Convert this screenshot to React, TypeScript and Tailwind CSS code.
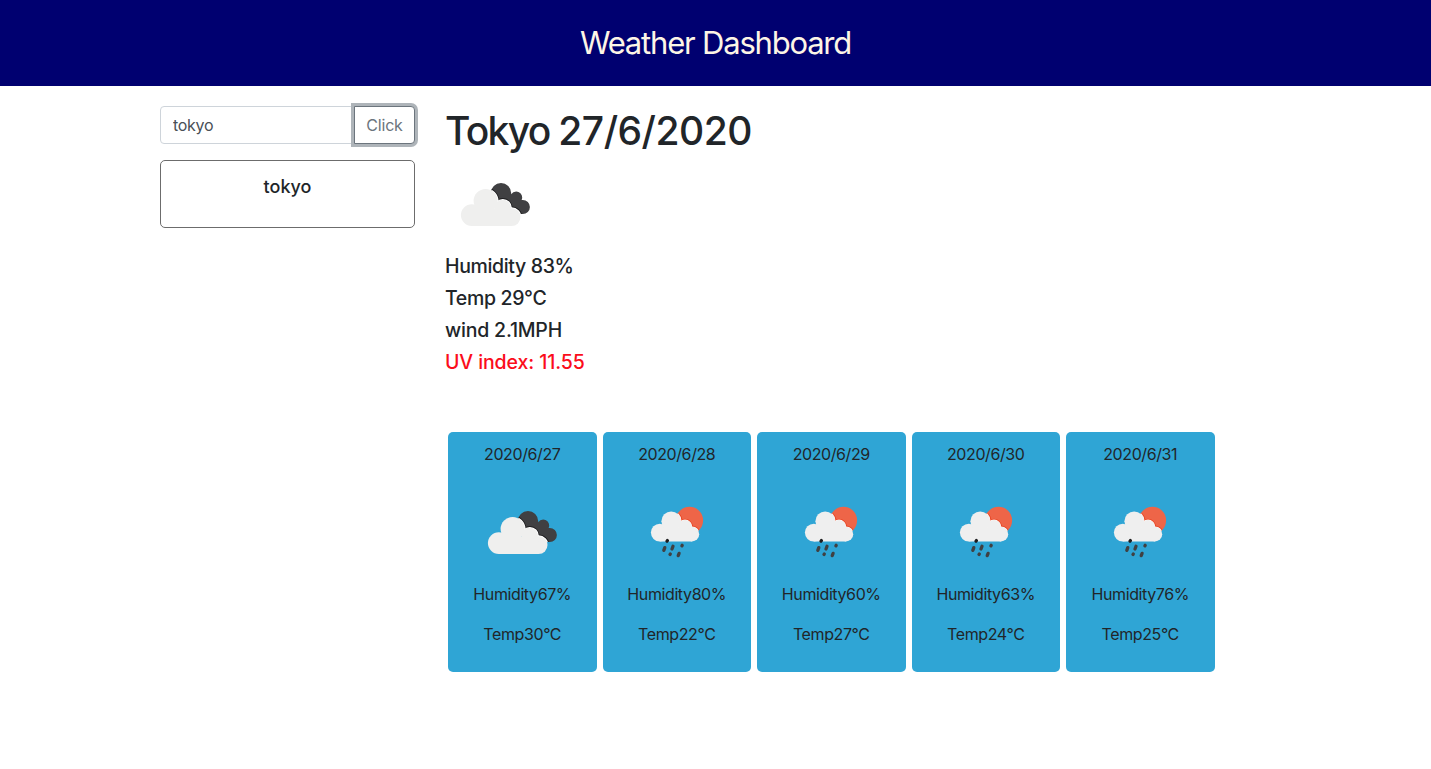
function CloudShape({ grow = 0, fill }: { grow?: number; fill: string }) {
  return (
    <g fill={fill} stroke={fill} strokeWidth={grow * 2}>
      <circle cx="26.8" cy="61.1" r="10.9" />
      <circle cx="40.6" cy="47.1" r="12" />
      <circle cx="57.8" cy="54" r="8.2" />
      <circle cx="66.6" cy="63.1" r="8.9" />
      <path d="M26.8 72V55H60L66.6 60V72Z" />
    </g>
  );
}

function BrokenClouds({ id }: { id: string }) {
  return (
    <svg className="block size-[100px]" viewBox="0 0 100 100" aria-hidden="true">
      <defs>
        <clipPath id={id}>
          <circle cx="56" cy="39.2" r="10.2" />
          <circle cx="71.2" cy="43.4" r="6" />
          <circle cx="77.8" cy="53" r="7.1" />
          <path d="M50 46L62 37L74 47L78 60L66 60Z" />
        </clipPath>
      </defs>
      <g clipPath={`url(#${id})`}>
        <rect width="100" height="100" fill="#404042" />
        <CloudShape grow={1.7} fill="#1c1c1e" />
        <CloudShape grow={0.9} fill="#ffffff" />
      </g>
      <CloudShape fill="#efefee" />
    </svg>
  );
}

function SmallCloud({ grow = 0, fill }: { grow?: number; fill: string }) {
  return (
    <g fill={fill} stroke={fill} strokeWidth={grow * 2}>
      <circle cx="32.8" cy="50.6" r="8.9" />
      <circle cx="44.2" cy="39.2" r="9.8" />
      <circle cx="58" cy="44.8" r="6.6" />
      <circle cx="65" cy="52.2" r="7.2" />
      <path d="M32.8 59.5V46H60L65 50V59.5Z" />
    </g>
  );
}

function SunRain({ id }: { id: string }) {
  return (
    <svg className="block size-[100px]" viewBox="0 0 100 100" aria-hidden="true">
      <defs>
        <clipPath id={id}>
          <circle cx="62.5" cy="38.4" r="13.6" />
        </clipPath>
      </defs>
      <g clipPath={`url(#${id})`}>
        <rect width="100" height="100" fill="#ee6548" />
        <SmallCloud grow={1.4} fill="#ea4523" />
        <SmallCloud grow={0.6} fill="#f8f4f2" />
      </g>
      <SmallCloud fill="#efefef" />
      <g stroke="#404042" strokeWidth="3.3" strokeLinecap="round">
        <path d="M40.4 58.6L40 59.2" stroke="#1c1c1e" />
        <path d="M37.8 65.6L36.8 68.4" />
        <path d="M46 64.3L45 67" />
        <path d="M55.2 63.3L54.9 63.8" />
        <path d="M43.3 72.1L43 72.5" />
        <path d="M52.1 71.4L51.2 73.6" />
      </g>
    </svg>
  );
}

const days = [
  { date: "2020/6/27", humidity: 67, temp: 30, rain: false },
  { date: "2020/6/28", humidity: 80, temp: 22, rain: true },
  { date: "2020/6/29", humidity: 60, temp: 27, rain: true },
  { date: "2020/6/30", humidity: 63, temp: 24, rain: true },
  { date: "2020/6/31", humidity: 76, temp: 25, rain: true },
];

export default function App() {
  return (
    <div className="min-h-[769px] bg-white font-['Inter',sans-serif] text-base leading-6 text-[#212529]">
      <header className="flex h-[86px] items-center justify-center bg-[#000070]">
        <h1 className="pb-px text-[31px] leading-[38px] font-[430] tracking-[-1.2px] text-[#fdf5e6]">
          Weather Dashboard
        </h1>
      </header>
      <div className="mx-auto flex w-[1141px] pt-5">
        <aside className="w-[285px] px-[15px]">
          <div className="flex h-[38px]">
            <input
              aria-label="City"
              defaultValue="tokyo"
              className="h-[38px] w-0 flex-1 rounded-l border border-[#ced4da] bg-white px-3 tracking-[-0.3px] text-[#495057] outline-none"
            />
            <button className="-ml-px h-[38px] w-[61px] rounded-r border border-[#6c757d] bg-white tracking-[-0.2px] text-[#6c757d] shadow-[0_0_0_3px_#aeb4b9]">
              Click
            </button>
          </div>
          <div className="mt-4 h-[68px] rounded-[5px] border border-[#6c6c6c] pt-3 text-center text-lg leading-[27px] font-[450]">
            tokyo
          </div>
        </aside>
        <main className="w-[855px] px-[15px]">
          <h2 className="pt-px text-[39px] leading-[47px] font-[550] tracking-[-0.5px]">
            <span className="tracking-[-1.7px]">Tokyo </span>27/6/2020
          </h2>
          <BrokenClouds id="now" />
          <div className="flex flex-col gap-2 text-[19.5px] leading-6 font-[530] tracking-[-0.35px]">
            <p>Humidity 83%</p>
            <p>Temp 29°C</p>
            <p className="tracking-[-0.2px]">wind 2.1MPH</p>
            <p className="tracking-[-0.1px] text-[#fb0d1b]">UV index: 11.55</p>
          </div>
          <div className="mt-[58px] flex gap-1.5 pl-[3px]">
            {days.map((d) => (
              <section
                key={d.date}
                className="flex h-60 w-[148.5px] flex-col items-center rounded-[5px] bg-[#2fa5d5] pt-2.5 tracking-[-0.4px]"
              >
                <p>{d.date}</p>
                <div className="mt-4">{d.rain ? <SunRain id={d.date} /> : <BrokenClouds id={d.date} />}</div>
                <p>Humidity{d.humidity}%</p>
                <p className="mt-4">Temp{d.temp}°C</p>
              </section>
            ))}
          </div>
        </main>
      </div>
    </div>
  );
}
